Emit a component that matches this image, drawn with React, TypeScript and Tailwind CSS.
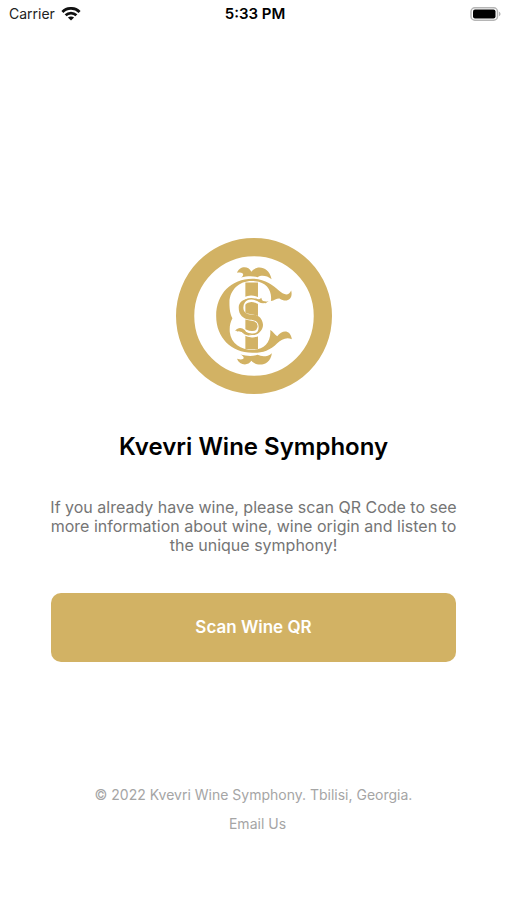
import React from "react";

function WifiIcon() {
  return (
    <svg className="h-[14px] w-[20px]" viewBox="0 0 20 14" fill="none" stroke="#111" strokeWidth="2.8" aria-hidden="true">
      <path d="M1.4 4.9 C6.2 0.2 13.8 0.2 18.6 4.9" />
      <path d="M4.6 8.3 C7.7 5.3 12.3 5.3 15.4 8.3" />
      <path d="M10 13.6 L6.9 10.5 C8.6 9 11.4 9 13.1 10.5 Z" fill="#111" stroke="none" />
    </svg>
  );
}

function BatteryIcon() {
  return (
    <svg className="h-[14px] w-[31px]" viewBox="0 0 31 14" aria-hidden="true">
      <rect x="1" y="0.8" width="26.5" height="12.4" rx="3.8" fill="#fff" stroke="#b5b5b5" strokeWidth="1.5" />
      <rect x="3" y="2.5" width="22.5" height="9" rx="2" fill="#000" />
      <path d="M29 4.8 C31 5.5 31 8.5 29 9.2 Z" fill="#b5b5b5" />
    </svg>
  );
}

function Logo() {
  return (
    <svg className="h-[156px] w-[156px]" viewBox="17 23 470 470" role="img" aria-label="Kvevri Wine Symphony logo">
      <circle cx="252" cy="258" r="207.500" fill="#fff" stroke="#d2b264" strokeWidth="55" />
      <g fill="#d2b264">
        {/* leaves above and below the stem */}
        <path d="M201 128 C207 108 235 105 244 125 C255 106 296 104 305 147 C291 136 274 134 263 141 C246 136 230 138 212 142 C224 137 222 123 201 128 Z" />
        <path d="M201 387 C222 394 228 382 211 374 C229 379 247 380 263 375 C275 381 292 382 306 370 C300 412 258 410 244 393 C234 410 207 406 201 387 Z" />
        <path d="M226 157 H264 V358 H226 Z" />
        {/* crescent with curled ends */}
        <path d="M303 213 C307 180 290 156 255 153 C212 148 179 176 178 217 C178 240 181 252 187 265 C180 279 178 290 179 306 C183 342 213 361 252 360 C284 358 304 336 301 300 C309 304 314 313 322 319 C337 299 362 299 366 328 C349 320 335 329 322 340 C300 362 276 370 247 369 C183 368 138 323 138 258 C138 191 184 146 247 146 C285 146 310 167 325 180 C342 195 356 199 364 181 C371 209 349 219 329 205 C320 204 314 211 303 213 Z" />
      </g>
      {/* small centre curl, cut out of the stem */}
      <g fill="none" strokeLinecap="round" strokeLinejoin="round">
        <path d="M287 217 C270 217 258 205 243 206 C222 207 211 222 212 239 C213 265 241 259 258 266 C281 277 275 314 247 313 C227 314 219 299 202 302" stroke="#fff" strokeWidth="19" />
        <path d="M287 217 C270 217 258 205 243 206 C222 207 211 222 212 239 C213 265 241 259 258 266 C281 277 275 314 247 313 C227 314 219 299 202 302" stroke="#d2b264" strokeWidth="5" />
      </g>
      <path fill="#d2b264" d="M206 233 C206 254 218 266 239 269 C257 269 266 278 266 291 C266 301 262 308 255 314 C271 309 280 297 279 283 C277 264 264 254 247 254 C230 254 221 247 220 235 C219 222 226 212 236 206 C217 208 206 217 206 233 Z" />
      <path fill="#d2b264" d="M256 204 C265 211 271 207 274 203 C275 214 285 217 296 213 C285 224 265 222 256 204 Z M195 303 C205 290 216 294 224 300 C229 310 237 313 246 315 C231 319 222 314 217 308 C211 301 204 302 195 303 Z" />
    </svg>
  );
}

function App() {
  return (
    <div className="flex min-h-screen flex-col bg-white font-['Inter',sans-serif]">
      <header className="grid h-7 grid-cols-3 items-center pr-1.5 pl-[9px] text-sm text-[#222]">
        <div className="flex items-center gap-1.5">
          <span>Carrier</span>
          <WifiIcon />
        </div>
        <time className="text-center text-[15px] font-semibold text-black">5:33 PM</time>
        <div className="flex justify-end">
          <BatteryIcon />
        </div>
      </header>

      <main className="flex flex-col items-center px-[10%] pt-[210px] text-center">
        <Logo />
        <h1 className="mt-[37px] text-2xl leading-8 font-semibold text-black">Kvevri Wine Symphony</h1>
        <p className="-mx-1 mt-[35px] text-base leading-[19px] text-[#757575]">
          If you already have wine, please scan QR Code to see more information about wine, wine origin and listen to
          the unique symphony!
        </p>
        <button
          type="button"
          className="mt-[38px] h-[69px] w-full cursor-pointer rounded-[10px] bg-[#d2b264] text-[17px] font-semibold text-white"
        >
          Scan Wine QR
        </button>
      </main>

      <footer className="mt-auto flex flex-col items-center gap-[9px] pb-[66px] text-sm text-[#a5a5a5]">
        <p>© 2022 Kvevri Wine Symphony. Tbilisi, Georgia.</p>
        <a href="#email" className="pl-2">
          Email Us
        </a>
      </footer>
    </div>
  );
}

export default App;
